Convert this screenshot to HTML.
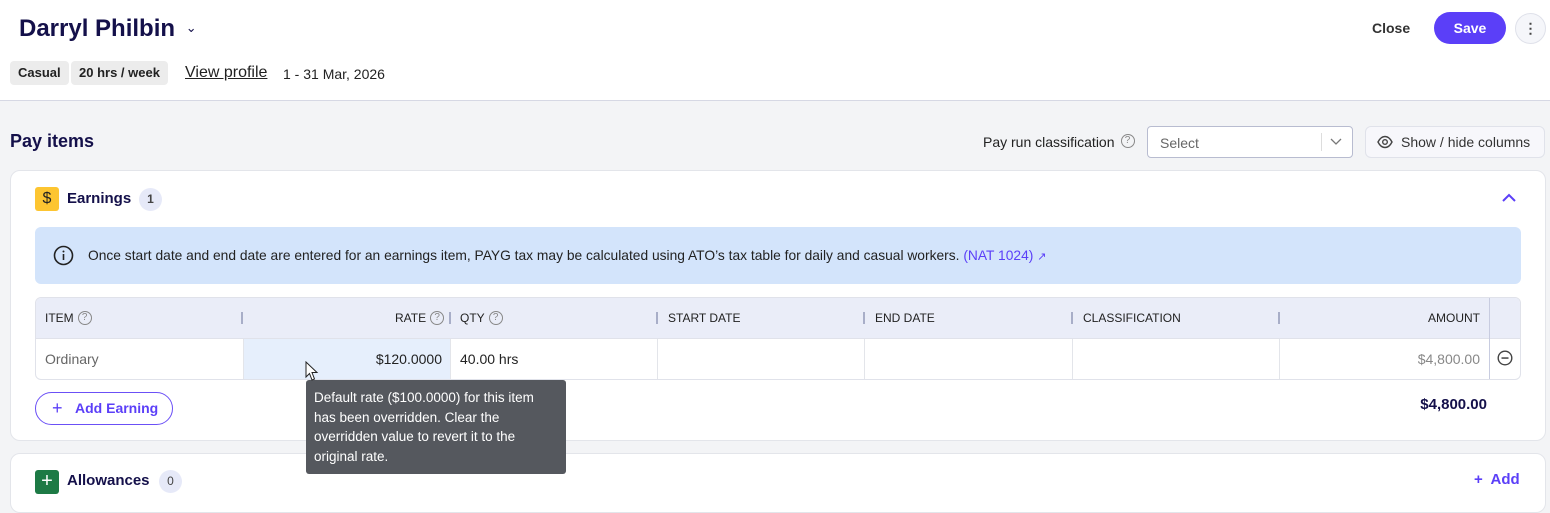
<!DOCTYPE html>
<html><head><style>
*{box-sizing:border-box;margin:0;padding:0}
body{width:1550px;height:482px;overflow:hidden;background:#f3f4f6;font-family:"Liberation Sans",sans-serif;position:relative;color:#1a1a2e}
.a{position:absolute}
.hdr{left:0;top:0;width:1550px;height:101px;background:#fff;border-bottom:1px solid #d6d8e4}
.tag{background:#ececec;border-radius:4px;font-size:13px;font-weight:bold;height:24px;line-height:24px;padding:0 8px;top:61px;color:#222}
.card{background:#fff;border:1px solid #e3e5ea;border-radius:10px}
.th{font-size:12px;color:#222;top:311px;line-height:14px;white-space:nowrap}
.sep{width:2px;height:12px;background:#a8aec8;top:312px}
.q{display:inline-block;width:14px;height:14px;border:1.3px solid #888;border-radius:50%;font-size:10px;line-height:12px;text-align:center;color:#888;vertical-align:top;margin-left:4px;font-weight:normal}
.cell{top:339px;height:40px;border-right:1px solid #e3e5ea}
</style></head><body>
<div class="a hdr"></div>
<div class="a" style="left:19px;top:15px;font-size:24px;font-weight:bold;color:#14104a">Darryl Philbin <span style="font-size:13px;font-weight:normal;vertical-align:4px;margin-left:4px">&#8964;</span></div>
<div class="a tag" style="left:10px">Casual</div>
<div class="a tag" style="left:71px">20 hrs / week</div>
<div class="a" style="left:185px;top:64px;font-size:16px;text-decoration:underline;color:#222">View profile</div>
<div class="a" style="left:283px;top:66px;font-size:14px;color:#222">1 - 31 Mar, 2026</div>
<div class="a" style="left:1372px;top:20px;font-size:14px;font-weight:bold;color:#333">Close</div>
<div class="a" style="left:1434px;top:12px;width:72px;height:32px;border-radius:16px;background:#5b3ff8;color:#fff;font-weight:bold;font-size:14px;text-align:center;line-height:32px">Save</div>
<div class="a" style="left:1515px;top:13px;width:31px;height:31px;border-radius:50%;border:1px solid #dfe1ea;background:#f5f6fa;text-align:center;line-height:29px;font-weight:bold;font-size:14px;color:#444">&#8942;</div>

<div class="a" style="left:10px;top:131px;font-size:18px;font-weight:bold;color:#14104a">Pay items</div>
<div class="a" style="left:983px;top:134px;font-size:14px;color:#222;line-height:16px">Pay run classification<span class="q" style="margin-left:6px">?</span></div>
<div class="a" style="left:1147px;top:126px;width:206px;height:32px;border:1px solid #b8bcd0;border-radius:4px;background:#fff"><span class="a" style="left:12px;top:8px;font-size:14px;color:#666">Select</span><span class="a" style="left:173px;top:6px;width:1px;height:18px;background:#ddd"></span><svg class="a" style="left:182px;top:11px" width="12" height="8"><path d="M1 1L6 6L11 1" fill="none" stroke="#777" stroke-width="1.3"/></svg></div>
<div class="a" style="left:1365px;top:126px;width:180px;height:32px;border:1px solid #e0e2ea;border-radius:6px;background:#f7f7fb;font-size:14px;color:#333;line-height:30px;padding-left:35px">Show / hide columns
<svg class="a" style="left:11px;top:8px" width="16" height="14" viewBox="0 0 16 14"><path d="M1 7C3 3 5.5 1.5 8 1.5S13 3 15 7C13 11 10.5 12.5 8 12.5S3 11 1 7Z" fill="none" stroke="#444" stroke-width="1.4"/><circle cx="8" cy="7" r="2.3" fill="none" stroke="#444" stroke-width="1.4"/></svg></div>

<div class="a card" style="left:10px;top:170px;width:1536px;height:271px"></div>
<div class="a" style="left:35px;top:187px;width:24px;height:24px;background:#fdc531;border-radius:3px;text-align:center;line-height:24px;font-size:16px;color:#222">$</div>
<div class="a" style="left:67px;top:190px;font-size:15px;font-weight:bold;color:#14104a">Earnings</div>
<div class="a" style="left:139px;top:188px;width:23px;height:23px;border-radius:50%;background:#e6e9f8;font-size:12px;text-align:center;line-height:23px;color:#444;font-weight:bold">1</div>
<svg class="a" style="left:1501px;top:193px" width="16" height="10"><path d="M2 8L8 2L14 8" fill="none" stroke="#5b3ff8" stroke-width="2"/></svg>

<div class="a" style="left:35px;top:227px;width:1486px;height:57px;background:#d3e4fb;border-radius:6px"></div>
<svg class="a" style="left:53px;top:245px" width="21" height="21"><circle cx="10.5" cy="10.5" r="9" fill="none" stroke="#222" stroke-width="1.6"/><rect x="9.7" y="9" width="1.6" height="6" fill="#222"/><circle cx="10.5" cy="6.5" r="1" fill="#222"/></svg>
<div class="a" style="left:88px;top:248px;font-size:13.8px;color:#222;white-space:nowrap">Once start date and end date are entered for an earnings item, PAYG tax may be calculated using ATO’s tax table for daily and casual workers. <span style="color:#5b3ff8">(NAT 1024)</span> <span style="color:#5b3ff8;font-size:11px">&#8599;</span></div>

<div class="a" style="left:35px;top:297px;width:1486px;height:83px;border:1px solid #e0e2ea;border-radius:6px;background:#fff;overflow:hidden"><div style="height:41px;background:#eaedf8;border-bottom:1px solid #e0e2ea"></div></div>
<div class="a" style="left:1489px;top:298px;width:1px;height:81px;background:#c8cce0"></div>
<div class="a th" style="left:45px">ITEM<span class="q">?</span></div>
<div class="a sep" style="left:241px"></div>
<div class="a th" style="left:395px">RATE<span class="q">?</span></div>
<div class="a sep" style="left:449px"></div>
<div class="a th" style="left:460px">QTY<span class="q">?</span></div>
<div class="a sep" style="left:656px"></div>
<div class="a th" style="left:668px">START DATE</div>
<div class="a sep" style="left:863px"></div>
<div class="a th" style="left:875px">END DATE</div>
<div class="a sep" style="left:1071px"></div>
<div class="a th" style="left:1083px">CLASSIFICATION</div>
<div class="a sep" style="left:1278px"></div>
<div class="a th" style="right:70px">AMOUNT</div>
<div class="a cell" style="left:243px;width:208px;background:#e6effc;border-left:1px solid #e3e5ea"></div>
<div class="a cell" style="left:451px;width:207px"></div>
<div class="a cell" style="left:658px;width:207px"></div>
<div class="a cell" style="left:865px;width:208px"></div>
<div class="a cell" style="left:1073px;width:207px"></div>
<div class="a" style="left:45px;top:351px;font-size:14px;color:#666">Ordinary</div>
<div class="a" style="right:1108px;top:351px;font-size:14px;color:#222">$120.0000</div>
<div class="a" style="left:460px;top:351px;font-size:14px;color:#222">40.00 hrs</div>
<div class="a" style="right:70px;top:351px;font-size:14px;color:#888">$4,800.00</div>
<svg class="a" style="left:1497px;top:350px" width="16" height="16"><circle cx="8" cy="8" r="6.8" fill="none" stroke="#444" stroke-width="1.4"/><rect x="4.5" y="7.3" width="7" height="1.5" fill="#444"/></svg>

<div class="a" style="left:35px;top:392px;width:138px;height:33px;border:1.5px solid #6b50f6;border-radius:17px;color:#5b3ff8;font-size:14px;font-weight:bold;line-height:30px;padding-left:39px">Add Earning<span class="a" style="left:16px;top:0;font-size:18px;font-weight:normal">+</span></div>
<div class="a" style="right:63px;top:396px;font-size:15px;font-weight:bold;color:#14104a">$4,800.00</div>

<div class="a card" style="left:10px;top:453px;width:1536px;height:60px"></div>
<div class="a" style="left:35px;top:470px;width:24px;height:24px;background:#1d7a45;border-radius:3px;color:#fff;text-align:center;line-height:22px;font-size:20px">+</div>
<div class="a" style="left:67px;top:472px;font-size:15px;font-weight:bold;color:#14104a">Allowances</div>
<div class="a" style="left:159px;top:470px;width:23px;height:23px;border-radius:50%;background:#e6e9f8;font-size:12px;text-align:center;line-height:23px;color:#444">0</div>
<div class="a" style="left:1474px;top:471px;font-size:15px;font-weight:bold;color:#5b3ff8">+&nbsp; Add</div>

<div class="a" style="left:306px;top:380px;width:260px;height:94px;background:#55585e;border-radius:3px;color:#fff;font-size:13.5px;line-height:19.5px;padding:8px 8px;white-space:nowrap">Default rate ($100.0000) for this item<br>has been overridden. Clear the<br>overridden value to revert it to the<br>original rate.</div>
<svg class="a" style="left:305px;top:361px" width="14" height="21"><path d="M1 1L1 16L4.5 12.5L7 19L9.5 18L7 11.5L12 11.5Z" fill="#fff" stroke="#222" stroke-width="1"/></svg>
</body></html>
